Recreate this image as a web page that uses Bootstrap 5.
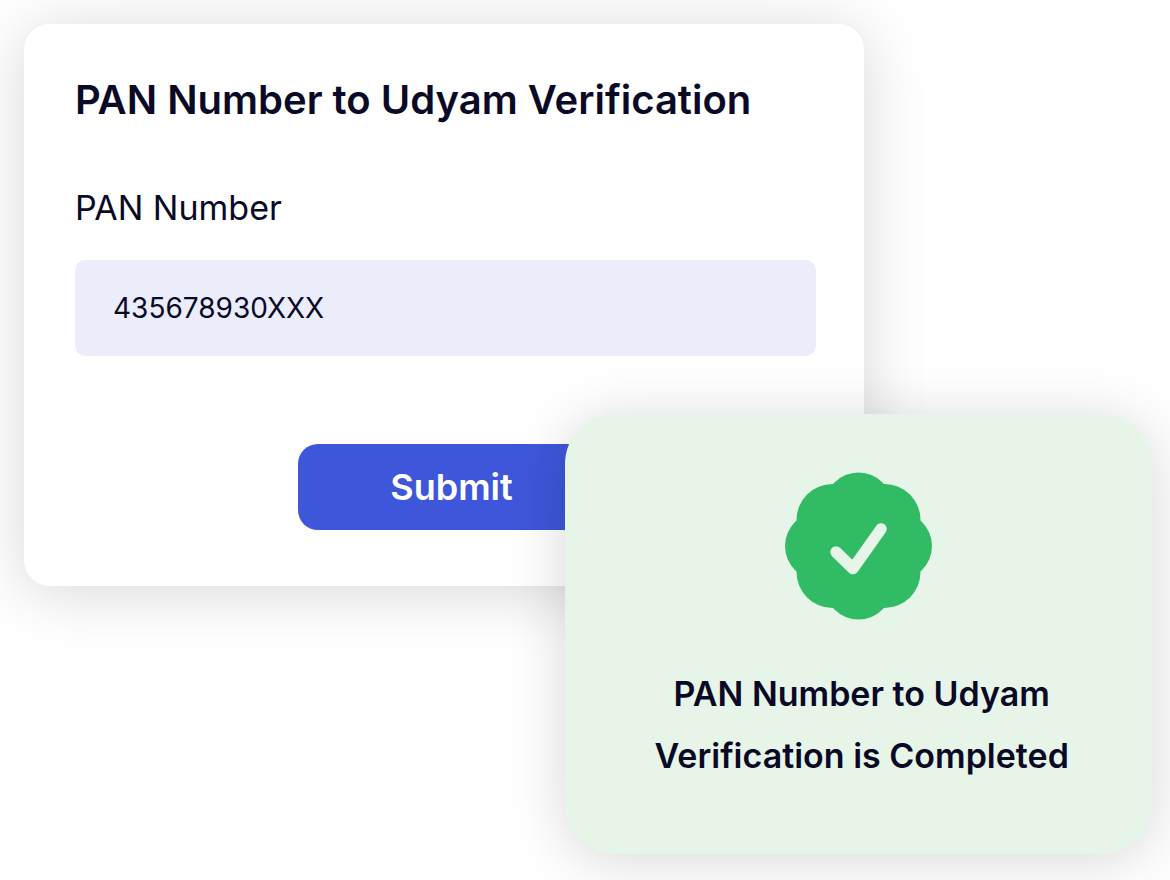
<!DOCTYPE html>
<html lang="en">
<head>
<meta charset="utf-8">
<meta name="viewport" content="width=device-width, initial-scale=1">
<title>PAN Number to Udyam Verification</title>
<link href="https://cdn.jsdelivr.net/npm/bootstrap@5.3.0/dist/css/bootstrap.min.css" rel="stylesheet">
<style>
body{font-family:Inter,"Liberation Sans",sans-serif;color:#0a0a26;background:#fff}
.stage{padding:24px 18px 26px 24px;overflow:hidden}
.form-panel{width:75%;max-width:840px;padding:48px 48px 56px 51px;border-radius:26px;background:#fff;box-shadow:0 6px 64px rgba(0,0,0,.16)}
.panel-title{font-size:40px;line-height:56px;font-weight:600;margin:0 0 54px}
.pan-label{font-size:34px;line-height:52px;margin:0 0 26px}
.pan-input,.pan-input:focus{height:96px;padding:0 38px;font-size:28px;color:#0a0a26;background:#ebedfb;border:0;border-radius:10px}
.submit-row{padding:88px 0 0 12px}
.submit-btn,.submit-btn:hover{width:308px;height:86px;font-size:36px;font-weight:600;color:#fff;background:#3e57da;border:0;border-radius:20px}
.done-panel{position:relative;width:52%;max-width:588px;margin-top:-172px;padding:58px 24px 67px;border-radius:50px;background:#e7f5e9;box-shadow:0 6px 60px rgba(0,0,0,.16)}
.done-text{font-size:34px;line-height:62px;font-weight:600;margin:43px 0 0;padding-left:6px}
</style>
<script src="https://cdn.jsdelivr.net/npm/bootstrap@5.3.0/dist/js/bootstrap.bundle.min.js" defer></script>
</head>
<body>
<main class="stage">
<form class="form-panel" onsubmit="return false">
<h1 class="panel-title">PAN Number to Udyam Verification</h1>
<label class="pan-label d-block" for="pan">PAN Number</label>
<input class="form-control pan-input" id="pan" type="text" value="435678930XXX">
<div class="submit-row d-flex justify-content-center"><button class="btn submit-btn" type="submit">Submit</button></div>
</form>
<section class="done-panel ms-auto text-center" role="status">
<svg class="d-block mx-auto" width="148" height="148" viewBox="0 0 148 148" aria-hidden="true">
<g fill="#32bb65"><circle cx="73.5" cy="74" r="55"/><circle cx="73.5" cy="34.5" r="34"/><circle cx="73.5" cy="113.500" r="34"/><circle cx="34" cy="74" r="34"/><circle cx="113" cy="74" r="34"/><circle cx="47.5" cy="48" r="36"/><circle cx="99.5" cy="48" r="36"/><circle cx="47.5" cy="100" r="36"/><circle cx="99.5" cy="100" r="36"/></g>
<path d="M51 80L68 96.5L96 57" fill="none" stroke="#e7f5e9" stroke-width="11.5" stroke-linecap="round" stroke-linejoin="round"/>
</svg>
<p class="done-text">PAN Number to Udyam<br>Verification is Completed</p>
</section>
</main>
</body>
</html>
